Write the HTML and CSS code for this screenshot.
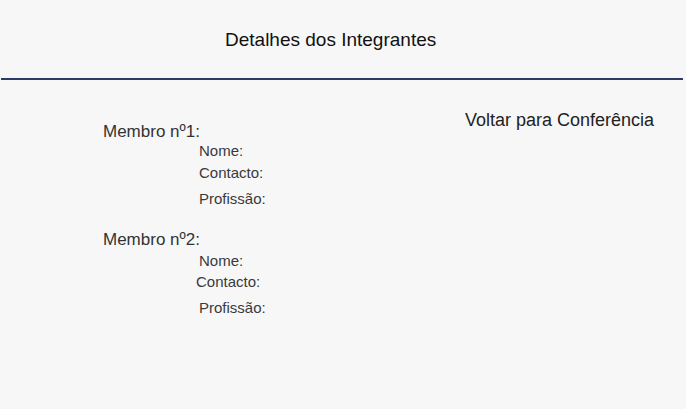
FILE: index.html
```html
<!DOCTYPE html>
<html lang="pt">
<head>
<meta charset="utf-8">
<title>Detalhes dos Integrantes</title>
<link rel="stylesheet" href="styles.css">
</head>
<body>
<header class="header">
  <h1 class="title">Detalhes dos Integrantes</h1>
</header>
<main class="content">
  <section class="members">
    <div class="member">
      <h2 class="member-title">Membro nº1:</h2>
      <p class="field">Nome:</p>
      <p class="field gap-4">Contacto:</p>
      <p class="field gap-8">Profissão:</p>
    </div>
    <div class="member second">
      <h2 class="member-title">Membro nº2:</h2>
      <p class="field gap-2">Nome:</p>
      <p class="field gap-3 shift">Contacto:</p>
      <p class="field gap-8">Profissão:</p>
    </div>
  </section>
  <a class="back" href="#">Voltar para Conferência</a>
</main>
</body>
</html>
```

FILE: styles.css
```css
html, body {
  margin: 0;
  padding: 0;
  background: #f7f7f8;
  font-family: "Liberation Sans", Arial, sans-serif;
}
.header {
  height: 49px;
  padding-top: 29px;
  margin: 0 3px 0 1px;
  border-bottom: 2px solid #2b3a67;
  box-sizing: content-box;
}
.title {
  margin: 0;
  padding-left: 224px;
  font-size: 19px;
  line-height: 22px;
  font-weight: normal;
  color: #111;
}
.content {
  display: flex;
  align-items: flex-start;
  padding-top: 30px;
}
.members {
  display: flex;
  flex-direction: column;
  padding-left: 103px;
  margin-top: 12px;
}
.member-title {
  margin: 0;
  font-size: 17px;
  line-height: 20px;
  font-weight: normal;
  color: #333;
}
.second {
  margin-top: 22px;
}
.field {
  margin: 0 0 0 96px;
  font-size: 15px;
  line-height: 18px;
  color: #3a3a3a;
}
.field.shift { margin-left: 93px; }
.gap-2 { margin-top: 2px; }
.gap-3 { margin-top: 3px; }
.gap-4 { margin-top: 4px; }
.gap-8 { margin-top: 8px; }
.back {
  margin-left: auto;
  margin-right: 32px;
  font-size: 18px;
  line-height: 21px;
  color: #222;
  text-decoration: none;
}
```
